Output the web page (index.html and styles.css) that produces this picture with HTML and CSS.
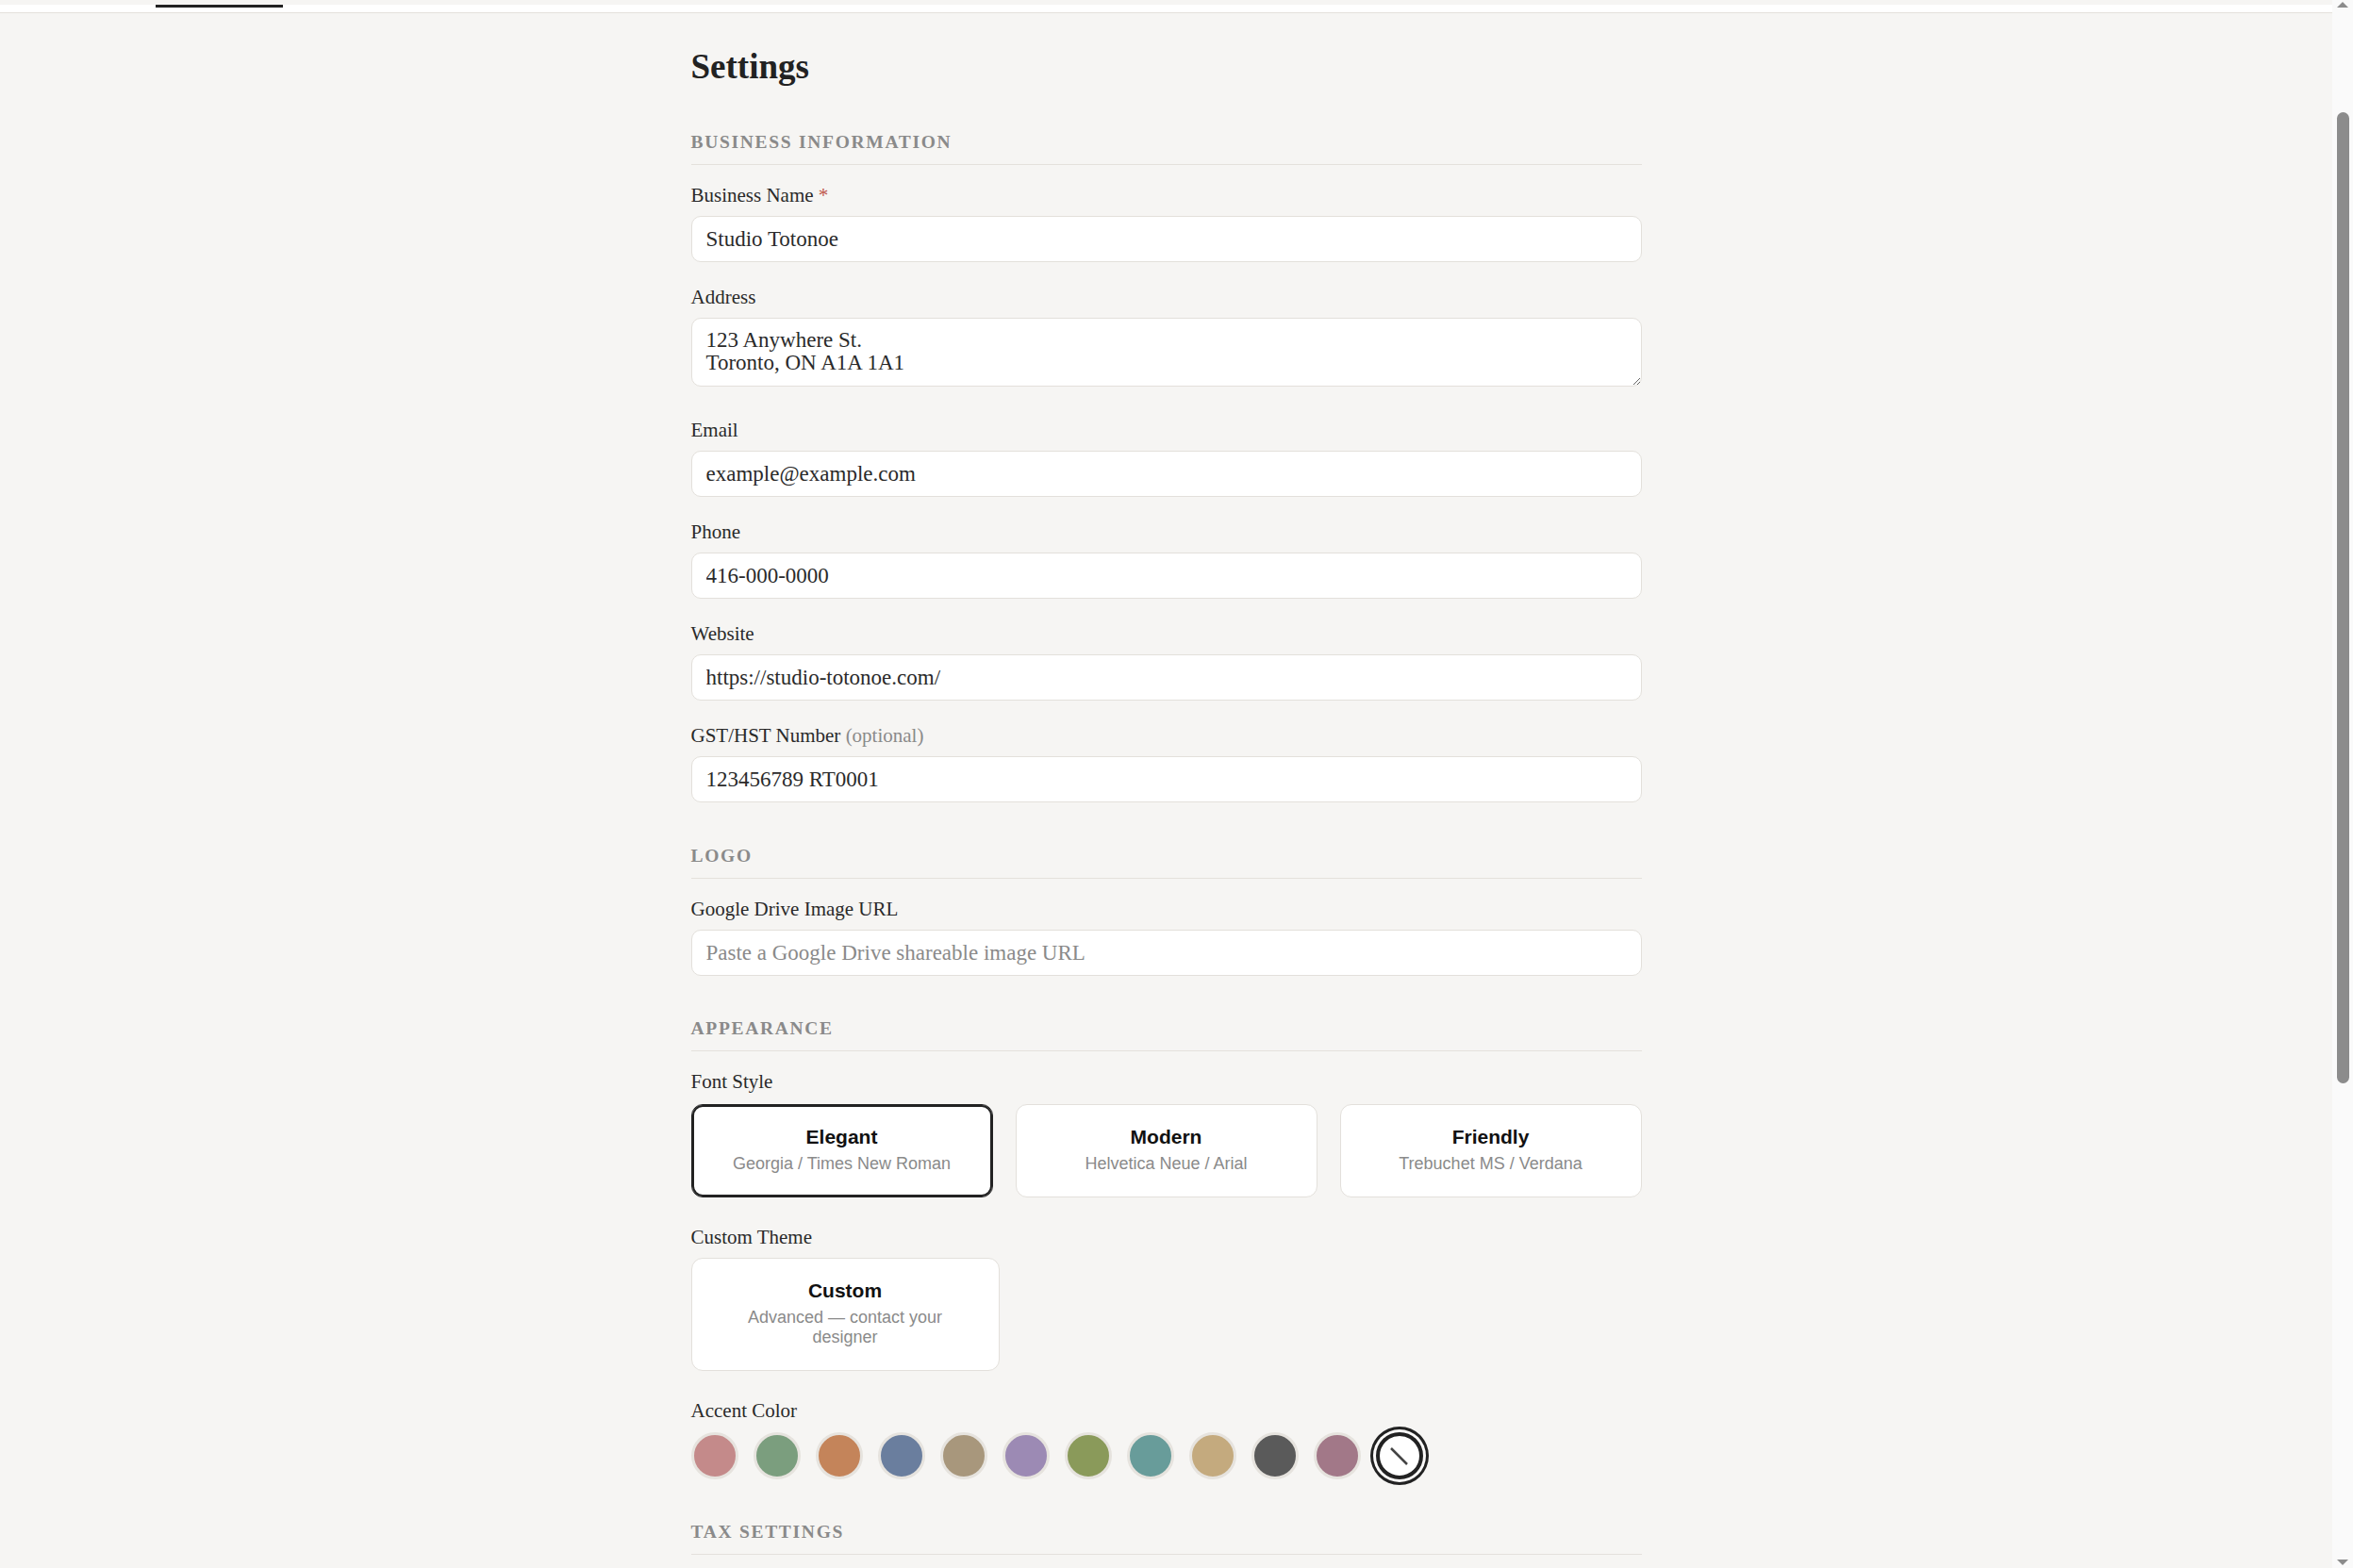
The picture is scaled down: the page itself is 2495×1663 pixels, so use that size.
FILE: index.html
```html
<!DOCTYPE html>
<html lang="en">
<head>
  <meta charset="UTF-8">
  <meta name="viewport" content="width=device-width, initial-scale=1.0">
  <title>Settings</title>
  <link rel="stylesheet" href="styles.css">
</head>
<body>
  <div class="page">
    <div class="topbar">
      <div class="topbar-tab"></div>
    </div>

    <main class="settings">
      <h1>Settings</h1>

      <section class="section section-business">
        <h2 class="section-title">Business Information</h2>

        <div class="field">
          <label for="business-name">Business Name <span class="required">*</span></label>
          <input type="text" id="business-name" value="Studio Totonoe">
        </div>

        <div class="field field-area">
          <label for="address">Address</label>
          <textarea id="address" rows="2">123 Anywhere St.
Toronto, ON A1A 1A1</textarea>
        </div>

        <div class="field">
          <label for="email">Email</label>
          <input type="text" id="email" value="example@example.com">
        </div>

        <div class="field">
          <label for="phone">Phone</label>
          <input type="text" id="phone" value="416-000-0000">
        </div>

        <div class="field">
          <label for="website">Website</label>
          <input type="text" id="website" value="https://studio-totonoe.com/">
        </div>

        <div class="field">
          <label for="gst">GST/HST Number <span class="optional">(optional)</span></label>
          <input type="text" id="gst" value="123456789 RT0001">
        </div>
      </section>

      <section class="section">
        <h2 class="section-title">Logo</h2>

        <div class="field">
          <label for="logo-url">Google Drive Image URL</label>
          <input type="text" id="logo-url" placeholder="Paste a Google Drive shareable image URL">
        </div>
      </section>

      <section class="section">
        <h2 class="section-title">Appearance</h2>

        <div class="field field-choices">
          <label>Font Style</label>
          <div class="choices">
            <button type="button" class="choice selected">
              <span class="choice-name">Elegant</span>
              <span class="choice-desc">Georgia / Times New Roman</span>
            </button>
            <button type="button" class="choice">
              <span class="choice-name">Modern</span>
              <span class="choice-desc">Helvetica Neue / Arial</span>
            </button>
            <button type="button" class="choice">
              <span class="choice-name">Friendly</span>
              <span class="choice-desc">Trebuchet MS / Verdana</span>
            </button>
          </div>
        </div>

        <div class="field field-custom">
          <label>Custom Theme</label>
          <button type="button" class="choice choice-custom">
            <span class="choice-name">Custom</span>
            <span class="choice-desc">Advanced — contact your designer</span>
          </button>
        </div>

        <div class="field field-accent">
          <label>Accent Color</label>
          <div class="swatches">
            <button type="button" class="swatch" style="background:#c48a8a"></button>
            <button type="button" class="swatch" style="background:#7b9e7e"></button>
            <button type="button" class="swatch" style="background:#c4845a"></button>
            <button type="button" class="swatch" style="background:#6a7e9e"></button>
            <button type="button" class="swatch" style="background:#a8977c"></button>
            <button type="button" class="swatch" style="background:#9c8ab4"></button>
            <button type="button" class="swatch" style="background:#8a9a5a"></button>
            <button type="button" class="swatch" style="background:#689c9a"></button>
            <button type="button" class="swatch" style="background:#c4aa7e"></button>
            <button type="button" class="swatch" style="background:#5a5a5a"></button>
            <button type="button" class="swatch" style="background:#a27888"></button>
            <button type="button" class="swatch swatch-none selected">
              <svg width="42" height="42" viewBox="0 0 42 42">
                <line x1="12" y1="13" x2="29" y2="30" stroke="#444" stroke-width="2.5"/>
              </svg>
            </button>
          </div>
        </div>
      </section>

      <section class="section">
        <h2 class="section-title">Tax Settings</h2>
      </section>
    </main>
  </div>

  <div class="scrollbar">
    <div class="scroll-arrow">
      <svg width="12" height="6" viewBox="0 0 12 6"><path d="M0 6 L6 0 L12 6 Z" fill="#8c8c8c"/></svg>
    </div>
    <div class="scroll-track">
      <div class="scroll-thumb"></div>
    </div>
    <div class="scroll-arrow scroll-arrow-down">
      <svg width="12" height="6" viewBox="0 0 12 6"><path d="M0 0 L6 6 L12 0 Z" fill="#8c8c8c"/></svg>
    </div>
  </div>
</body>
</html>
```

FILE: styles.css
```css
body {
  margin: 0;
  display: flex;
  height: 100vh;
  overflow: hidden;
  background-color: #f6f5f3;
  color: #2a2a2a;
  font-family: "Liberation Serif", "Times New Roman", serif;
}

.page {
  flex: 1;
  min-width: 0;
  overflow: hidden;
}

.topbar {
  height: 8px;
  background-color: #fff;
  border-bottom: 1px solid #e4e1dc;
}

.topbar-tab {
  margin-left: 165px;
  margin-top: 5px;
  width: 135px;
  height: 3px;
  background-color: #222;
}

.settings {
  max-width: 1008px;
  margin: 0 auto;
  padding-top: 35px;
}

h1 {
  margin: 0 0 47px;
  font-size: 37px;
  line-height: 44px;
  font-weight: bold;
  color: #222;
}

/* the last field's 25px bottom margin collapses into this one */
.section + .section {
  margin-top: 45px;
}

.section-business + .section {
  margin-top: 46px;
}

.section-title {
  margin: 0 0 20px;
  padding-bottom: 12px;
  border-bottom: 1px solid #e4e1dc;
  font-size: 19.5px;
  line-height: 22px;
  font-weight: bold;
  letter-spacing: 1.7px;
  text-transform: uppercase;
  color: #8a8a8a;
}

.field {
  margin-bottom: 25px;
}

.field label {
  display: block;
  margin-bottom: 10px;
  font-size: 21px;
  line-height: 24px;
}

.required {
  color: #c0584c;
}

.optional {
  color: #8a8a8a;
}

input[type="text"],
textarea {
  display: block;
  width: 100%;
  box-sizing: border-box;
  margin: 0;
  padding: 11px 15px;
  border: 1px solid #e3e0db;
  border-radius: 10px;
  background-color: #fff;
  color: #2a2a2a;
  font-family: "Liberation Serif", "Times New Roman", serif;
  font-size: 23px;
}

input[type="text"] {
  height: 49px;
  line-height: 25px;
}

input::placeholder {
  color: #8a8a8a;
}

textarea {
  height: 73px;
  padding-bottom: 12px;
  line-height: 24px;
  resize: vertical;
}

.field-area {
  margin-bottom: 34px;
}

.field-choices,
.field-custom {
  margin-bottom: 30px;
}

.field-choices label {
  margin-bottom: 12px;
}

.field-accent label {
  margin-bottom: 11px;
}

.choices {
  display: grid;
  grid-template-columns: repeat(3, 1fr);
  gap: 24px;
}

.choice {
  display: block;
  box-sizing: border-box;
  margin: 0;
  padding: 22px 30px 24px;
  border: 1px solid #e3e0db;
  border-radius: 12px;
  background-color: #fff;
  text-align: center;
  font-family: "Liberation Sans", Arial, sans-serif;
  cursor: pointer;
}

.choice.selected {
  border-color: #222;
  box-shadow: inset 0 0 0 2px #222;
}

.choice-name {
  display: block;
  font-size: 21px;
  line-height: 24px;
  font-weight: bold;
  color: #111;
}

.choice-desc {
  display: block;
  margin-top: 6px;
  font-size: 18px;
  line-height: 21px;
  color: #8a8a8a;
}

.choice-custom {
  width: 327px;
}

.swatches {
  display: flex;
  gap: 16px;
}

.swatch {
  width: 50px;
  height: 50px;
  box-sizing: border-box;
  margin: 0;
  padding: 0;
  border: 3px solid #e6e3de;
  border-radius: 50%;
  cursor: pointer;
}

.swatch-none {
  display: flex;
  align-items: center;
  justify-content: center;
  background-color: #fff;
}

.swatch.selected {
  border: 4px solid #222;
  box-shadow: 0 0 0 3px #fbfaf9, 0 0 0 6px #222;
}

.scrollbar {
  width: 22px;
  flex-shrink: 0;
  display: flex;
  flex-direction: column;
  background-color: #fafafa;
}

.scroll-arrow {
  height: 22px;
  display: flex;
  justify-content: center;
  align-items: flex-start;
  padding-top: 2px;
  box-sizing: border-box;
}

.scroll-arrow-down {
  align-items: flex-end;
  padding-top: 0;
  padding-bottom: 3px;
}

.scroll-track {
  flex: 1;
}

.scroll-thumb {
  width: 13px;
  height: 1030px;
  margin: 97px auto 0;
  border-radius: 7px;
  background-color: #8c8c8c;
}
```
